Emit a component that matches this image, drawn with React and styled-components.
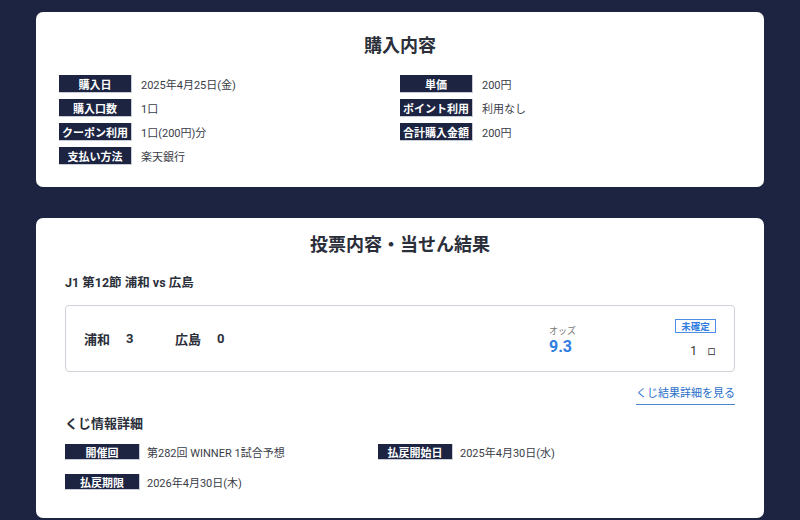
import styled, { createGlobalStyle } from 'styled-components'

const GlobalStyle = createGlobalStyle`
  html, body {
    margin: 0;
    padding: 0;
    background: #1c2442;
  }
  body {
    font-family: Roboto, "Noto Sans CJK JP", sans-serif;
    color: #333;
  }
`

const purchase = [
  ['購入日', '2025年4月25日(金)'],
  ['単価', '200円'],
  ['購入口数', '1口'],
  ['ポイント利用', '利用なし'],
  ['クーポン利用', '1口(200円)分'],
  ['合計購入金額', '200円'],
  ['支払い方法', '楽天銀行'],
]

const lotto = [
  ['開催回', '第282回 WINNER 1試合予想'],
  ['払戻開始日', '2025年4月30日(水)'],
  ['払戻期限', '2026年4月30日(木)'],
]

const App = () => {
  return (
    <>
      <GlobalStyle />
      <Page>
        <Card $pad="22px 23px 22px">
          <Title>購入内容</Title>
          <InfoGrid $cols="1fr 1fr" $gap="6px" $top="17px">
            {purchase.map(([k, v]) => (
              <InfoRow key={k} $gap="9px">
                <Label $w="73px" $h="18px">{k}</Label>
                <Value>{v}</Value>
              </InfoRow>
            ))}
          </InfoGrid>
        </Card>

        <Card $pad="15px 29px 28px">
          <Title>投票内容・当せん結果</Title>
          <MatchTitle>J1 第12節 浦和 vs 広島</MatchTitle>
          <ResultBox>
            <Score>
              <Team>浦和</Team>
              <Goal>3</Goal>
              <Team>広島</Team>
              <Goal>0</Goal>
            </Score>
            <Odds>
              <OddsLabel>オッズ</OddsLabel>
              <OddsValue>9.3</OddsValue>
            </Odds>
            <Status>
              <Badge>未確定</Badge>
              <Count>
                1<small>ロ</small>
              </Count>
            </Status>
          </ResultBox>
          <LinkRow>
            <DetailLink href="#">くじ結果詳細を見る</DetailLink>
          </LinkRow>
          <SubTitle>くじ情報詳細</SubTitle>
          <InfoGrid $cols="313px 1fr" $gap="14px" $top="11px">
            {lotto.map(([k, v]) => (
              <InfoRow key={k} $gap="7px">
                <Label $w="75px" $h="16px">{k}</Label>
                <Value>{v}</Value>
              </InfoRow>
            ))}
          </InfoGrid>
        </Card>
      </Page>
    </>
  )
}

const Page = styled.div`
  width: 728px;
  margin: 0 auto;
  padding-top: 12px;
  display: flex;
  flex-direction: column;
  gap: 31px;
`
const Card = styled.section`
  background: #fff;
  border-radius: 7px;
  padding: ${(p) => p.$pad};
`
const Title = styled.h2`
  margin: 0;
  text-align: center;
  font-size: 18px;
  line-height: 24px;
  font-weight: 700;
  color: #2b2f3a;
`
const InfoGrid = styled.div`
  display: grid;
  grid-template-columns: ${(p) => p.$cols};
  row-gap: ${(p) => p.$gap};
  margin-top: ${(p) => p.$top};
`
const InfoRow = styled.div`
  display: flex;
  align-items: center;
  gap: ${(p) => p.$gap};
`
const Label = styled.span`
  box-sizing: border-box;
  width: ${(p) => p.$w};
  height: ${(p) => p.$h};
  flex-shrink: 0;
  display: flex;
  align-items: center;
  justify-content: center;
  background: #1c2442;
  border-right: 1px solid #c8ccd6;
  border-bottom: 1px solid #c8ccd6;
  color: #fff;
  font-size: 11px;
  font-weight: 700;
  white-space: nowrap;
`
const Value = styled.span`
  font-size: 11px;
  color: #3a3d48;
`
const MatchTitle = styled.h3`
  margin: 17px 0 0;
  font-size: 12.5px;
  line-height: 18px;
  font-weight: 700;
  color: #2b2f3a;
`
const ResultBox = styled.div`
  margin-top: 13px;
  height: 67px;
  box-sizing: border-box;
  border: 1px solid #cfd2d8;
  border-radius: 4px;
  padding: 0 18px;
  display: flex;
  align-items: center;
`
const Score = styled.div`
  flex: 1;
  display: flex;
  align-items: center;
  font-size: 13px;
  font-weight: 700;
  color: #2b2f3a;
`
const Team = styled.span`
  width: 42px;
`
const Goal = styled.span`
  width: 49px;
`
const Odds = styled.div`
  width: 126px;
  display: flex;
  flex-direction: column;
  align-self: stretch;
  justify-content: center;
  padding-top: 4px;
`
const OddsLabel = styled.span`
  font-size: 9px;
  color: #777;
  line-height: 12px;
`
const OddsValue = styled.span`
  font-size: 16px;
  font-weight: 700;
  color: #2f7de1;
  line-height: 20px;
`
const Status = styled.div`
  width: 41px;
  display: flex;
  flex-direction: column;
  align-items: flex-end;
  gap: 11px;
`
const Badge = styled.span`
  box-sizing: border-box;
  width: 41px;
  height: 14px;
  display: flex;
  align-items: center;
  justify-content: center;
  border: 1px solid #4a8fe3;
  color: #2f7de1;
  font-size: 9.5px;
  font-weight: 700;
`
const Count = styled.span`
  font-size: 12px;
  color: #333;
  line-height: 14px;
  small {
    font-size: 9px;
    margin-left: 10px;
  }
`
const LinkRow = styled.div`
  display: flex;
  justify-content: flex-end;
  margin-top: 14px;
`
const DetailLink = styled.a`
  font-size: 11px;
  line-height: 16px;
  color: #2a6fc9;
  text-decoration: none;
  padding-bottom: 2px;
  border-bottom: 1px solid #4a86d0;
`
const SubTitle = styled.h3`
  margin: 10px 0 0;
  font-size: 13px;
  line-height: 18px;
  font-weight: 700;
  color: #2b2f3a;
`

export default App
